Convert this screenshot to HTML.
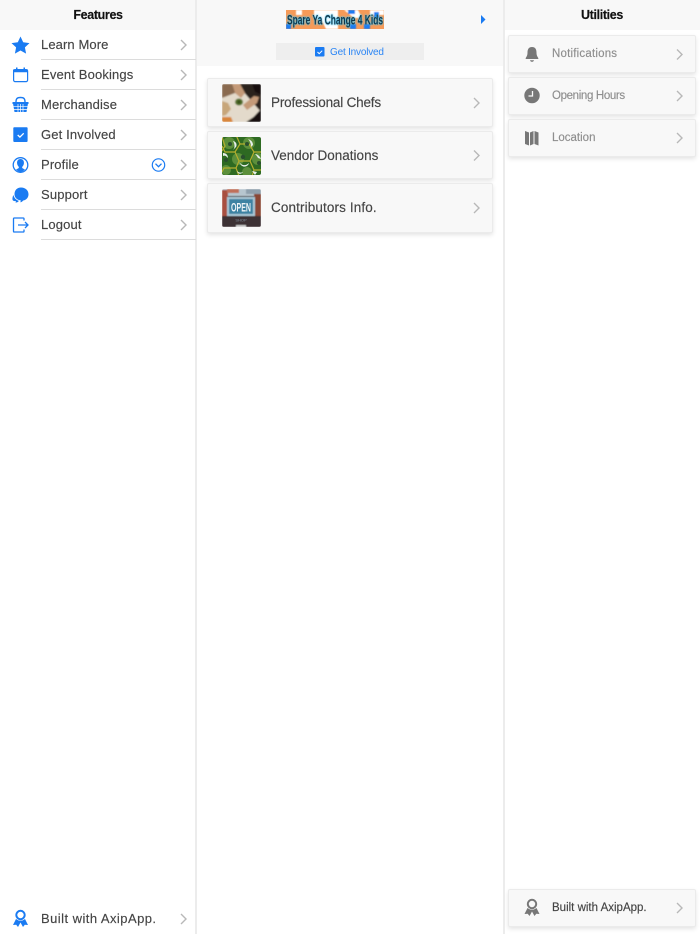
<!DOCTYPE html>
<html><head><meta charset="utf-8">
<style>
*{box-sizing:border-box}
html,body{margin:0;padding:0;width:700px;height:934px;overflow:hidden;background:#fff;font-family:"Liberation Sans",sans-serif}
.a{position:absolute}
.t{position:absolute;white-space:nowrap;line-height:16px;-webkit-text-stroke:.15px currentColor}
.m{font-size:13px;color:#444;letter-spacing:.15px;left:41px}
.c{font-size:13.5px;color:#444;left:271px}
.u{font-size:11.5px;color:#8e8e8e;left:552px}
.line{position:absolute;left:41px;width:155px;height:1px;background:#dcdcdc}
.card{position:absolute;background:#f8f8f8;border:1px solid #ebebeb;border-radius:2px;box-shadow:0 2px 4px rgba(0,0,0,.11)}
.h{font-size:12.5px;font-weight:bold;color:#111;text-align:center;letter-spacing:-.35px}
svg{position:absolute;overflow:visible}
svg.th{overflow:hidden;border-radius:2px}
</style></head><body>
<div class="a" style="left:0;top:0;width:195px;height:30px;background:#f8f8f8"></div>
<div class="a" style="left:197px;top:0;width:307px;height:66px;background:#f8f8f8"></div>
<div class="a" style="left:505px;top:0;width:195px;height:30px;background:#f8f8f8"></div>
<div class="a" style="left:195px;top:0;width:2px;height:934px;background:#ececec"></div>
<div class="a" style="left:503px;top:0;width:2px;height:934px;background:#ececec"></div>

<div class="t h" style="left:0;top:7px;width:196px">Features</div>
<div class="t h" style="left:505px;top:7px;width:194px">Utilities</div>

<div class="t m" style="top:37px;letter-spacing:.1px">Learn More</div>
<div class="t m" style="top:67px">Event Bookings</div>
<div class="t m" style="top:97px">Merchandise</div>
<div class="t m" style="top:127px">Get Involved</div>
<div class="t m" style="top:157px">Profile</div>
<div class="t m" style="top:187px">Support</div>
<div class="t m" style="top:217px">Logout</div>
<div class="t m" style="top:911px;letter-spacing:.45px">Built with AxipApp.</div>
<div class="line" style="top:59px"></div><div class="line" style="top:89px"></div><div class="line" style="top:119px"></div><div class="line" style="top:149px"></div><div class="line" style="top:179px"></div><div class="line" style="top:209px"></div><div class="line" style="top:239px"></div>

<svg style="left:0;top:0" width="700" height="934" fill="none">
<g stroke="#b8b8b8" stroke-width="1.400">
<path d="M181 40l5 5-5 5M181 70l5 5-5 5M181 100l5 5-5 5M181 130l5 5-5 5M181 160l5 5-5 5M181 190l5 5-5 5M181 220l5 5-5 5M181 914l5 5-5 5"/>
</g>
<path fill="#1a7bf2" d="M20.500 36.500l2.700 5.800 6.300.8-4.600 4.300 1.200 6.200-5.600-3.100-5.600 3.100 1.200-6.200-4.600-4.300 6.300-.8z"/>
<rect x="13.600" y="69.600" width="14" height="12" rx="1.500" stroke="#1a7bf2" stroke-width="1.200"/>
<path fill="#1a7bf2" d="M13 69.500h15v2.800H13zM16 67.500h1.500V70H16zM23.500 67.500H25V70h-1.500z"/>
<path fill="#1a7bf2" d="M12.500 102h16v2h-.6l-1.400 8h-12l-1.400-8h-.6z"/>
<path stroke="#1a7bf2" stroke-width="1.400" d="M16 102c0-3.500 1.300-4.500 4.500-4.500s4.500 1 4.500 4.500"/>
<path stroke="#fff" stroke-width=".7" d="M18 104v8M20.500 104v8M23 104v8M13 106.700h15M13 109.400h15"/>
<rect x="13.300" y="127.300" width="14.300" height="14.700" rx="1" fill="#1a7bf2"/>
<path stroke="#fff" stroke-width="1.300" d="M17.700 135l2.200 2.100 3.800-3.800"/>
<circle cx="20.500" cy="165" r="7.300" stroke="#1a7bf2" stroke-width="1.300"/>
<path fill="#1a7bf2" d="M20.500 159c2.600 0 3.700 2 3.400 4.500-.2 1.500-1 2.700-1.700 3.400v1.100l2.800 1.600c-1.300 1.200-2.800 2.400-4.500 2.400s-3.200-1.200-4.500-2.400l2.800-1.600v-1.100c-.7-.7-1.500-1.900-1.700-3.400-.3-2.500.8-4.500 3.400-4.500z"/>
<circle cx="158.500" cy="165" r="6.200" stroke="#1a7bf2" stroke-width="1.200"/>
<path stroke="#1a7bf2" stroke-width="1.300" d="M155.500 163.700l3 3 3-3"/>
<path fill="#1a7bf2" d="M21 187.500c4.300 0 7.500 2.900 7.500 6.700 0 3.200-2 5.800-5.300 6.300-.7 1-1.700 1.700-3 1.700.5-.7.6-1.200.5-1.800-3.700-.5-6.200-3-6.200-6.200 0-3.800 2.500-6.700 6.500-6.700z"/>
<path fill="#1a7bf2" d="M13.500 195c.6 3 2.600 5 5.400 5.900-.6 1-1.700 1.800-3.400 1.600l.5-1.500c-2.700.4-3.900-.6-3.500-3 .1-1.100.4-2 1-3z"/>
<path stroke="#1a7bf2" stroke-width="1.300" d="M24 220.500v-1.700c0-.5-.3-.8-.8-.8H14.300c-.5 0-.8.300-.8.800v12.400c0 .5.300.8.800.8h8.900c.5 0 .8-.3.800-.8v-1.700M18 225h10M25 222l3 3-3 3"/>
<circle cx="20.500" cy="915" r="4.200" stroke="#1a7bf2" stroke-width="2"/>
<path fill="#1a7bf2" d="M16 919l2.500 1.500 2 .2 2-.2 2.500-1.500 3 6-3.200-.2-1.800 2.200-2.500-4.500-2.500 4.500-1.800-2.200-3.200.2z"/>
<path fill="#1a7bf2" d="M481 15l4.500 4.500-4.500 4.500z"/>
</svg>

<div class="a" style="left:276px;top:43px;width:148px;height:17px;background:#eee"></div>
<svg style="left:315px;top:47px" width="10" height="10" fill="none"><rect width="9.500" height="9.500" rx="1" fill="#1a7bf2"/><path stroke="#fff" stroke-width="1" d="M2.500 5l1.700 1.700 3-3"/></svg>
<div class="t" style="left:330px;top:44px;font-size:10px;letter-spacing:-.2px;color:#2a85f5;-webkit-text-stroke:0;line-height:17px">Get Involved</div>

<svg class="th" style="left:286px;top:10px;border-radius:0" width="98" height="19">
<defs><filter id="g" x="-5%" y="-20%" width="110%" height="140%"><feGaussianBlur stdDeviation=".7"/></filter><filter id="b1"><feGaussianBlur stdDeviation=".5"/></filter></defs>
<rect width="98" height="19" fill="#f59a58"/>
<g filter="url(#b1)">
<path fill="#fff" d="M10 0h6v5h-6zM28 0h24v19H40l-4-8-8-3zM58 0h14l4 8h-8zM84 0h14v5h-14z"/>
<path fill="#1a7bf2" d="M62 0h7v4h-7zM64 14h6v5h-6zM88 2h5v6h-5zM0 14h5v5H0zM78 14h6v5h-6z"/>
</g>
<text x="1" y="14.500" font-family="Liberation Sans" font-size="13.500" font-weight="bold" fill="#45c4f2" textLength="96" lengthAdjust="spacingAndGlyphs" filter="url(#g)" stroke="#45c4f2" stroke-width=".8">Spare Ya Change 4 Kids</text>
<text x="1" y="14.500" font-family="Liberation Sans" font-size="13.500" font-weight="bold" fill="#12384c" textLength="96" lengthAdjust="spacingAndGlyphs">Spare Ya Change 4 Kids</text>
</svg>

<div class="card" style="left:207px;top:78px;width:286px;height:49px"></div>
<div class="card" style="left:207px;top:131px;width:286px;height:48px"></div>
<div class="card" style="left:207px;top:183px;width:286px;height:50px"></div>
<div class="t c" style="top:95px;letter-spacing:-.19px">Professional Chefs</div>
<div class="t c" style="top:148px;letter-spacing:0">Vendor Donations</div>
<div class="t c" style="top:200px;letter-spacing:.12px">Contributors Info.</div>

<svg class="th" style="left:222px;top:84px" width="39" height="38">
<defs><filter id="s"><feGaussianBlur stdDeviation=".8"/></filter></defs>
<g filter="url(#s)">
<rect width="39" height="38" fill="#2c241c"/>
<path fill="#e3dacb" d="M0 13L20 6l19 22-15 10H0z"/>
<path fill="#8a6a50" d="M0 0h10l3 9-13 5z"/>
<path fill="#c49a78" d="M10 0h8l5 9-4 5-6-5zM21 21l11-9 5 1-2 6-10 7z"/>
<path fill="#15110d" d="M30 0h9v11l-6-3zM27 38l12-13v13z"/>
<ellipse cx="17" cy="18" rx="4" ry="3.500" fill="#55702a"/>
<path fill="#c7a67a" d="M0 17l6 2 3 6-5 6-4 1z"/>
<path fill="#d8853a" d="M0 33h9l2 5H0z"/>
<circle cx="17" cy="18" r="1.500" fill="#2f4a18"/>
</g>
</svg>
<svg class="th" style="left:222px;top:137px" width="39" height="38">
<defs><filter id="s2"><feGaussianBlur stdDeviation=".35"/></filter></defs>
<g filter="url(#s2)">
<rect width="39" height="38" fill="#2f6b24"/>
<g fill="#5b8f3a"><circle cx="7" cy="6" r="6"/><circle cx="27" cy="6" r="6"/><circle cx="16" cy="22" r="6"/><circle cx="36" cy="22" r="6"/><circle cx="4" cy="33" r="5"/><circle cx="25" cy="35" r="5"/></g>
<g fill="none" stroke="#b5ae2e" stroke-width="1.200"><path d="M0 0l3 9-3 5M14 -2l4 9-5 8H3l-3-6M14 -2M18 7h9M27 7l5 8-4 9M13 15l4 9-3 7 3 8M28 24H17M28 24l4 9-2 6M32 15h7M32 33h7M14 31H2l-2 4"/></g>
<g fill="#e8f0ea"><path d="M11 4a4 4 0 0 1 3 6l-3 3c2-2 2-6 0-9zM26 2c3 1 5 3 5 6l-2 2c0-3-1-6-3-8zM17 25c3 4 7 4 10 1-1 4-7 6-10-1zM1 16c3 0 5 2 5 5-2-2-3-3-5-2zM33 17c2 0 5 2 6 5l-3-1c-1-2-2-3-3-4zM15 34c2 2 4 2 6 1-1 2-5 3-6-1zM30 34l5 1-2 3z"/></g>
<g fill="#2a4f2e"><circle cx="8" cy="7" r="2"/><circle cx="25" cy="7" r="2"/><circle cx="21" cy="20" r="2.200"/><circle cx="4" cy="23" r="2"/><circle cx="37" cy="26" r="2"/></g>
</g>
</svg>
<svg class="th" style="left:222px;top:189px" width="39" height="38">
<defs><filter id="s3"><feGaussianBlur stdDeviation=".5"/></filter></defs>
<g filter="url(#s3)">
<rect width="39" height="38" fill="#3e3236"/>
<rect width="39" height="7" fill="#b7c6cf"/>
<rect x="0" y="1" width="6" height="26" fill="#a8503f"/>
<rect x="5" y="0" width="12" height="4" fill="#c0705a"/>
<rect x="32" y="3" width="7" height="24" fill="#8a4636"/>
<rect x="24" y="0" width="15" height="5" fill="#8fa0ad"/>
<rect x="5" y="8" width="28" height="19" fill="#aac8d6"/>
<rect x="7" y="10" width="24" height="15" fill="#3c82a2"/>
<rect x="14" y="36" width="10" height="2" fill="#c9c9c9"/>
</g>
<text x="19" y="22.500" font-family="Liberation Sans" font-size="12" font-weight="bold" fill="#eef4f7" text-anchor="middle" textLength="20" lengthAdjust="spacingAndGlyphs">OPEN</text>
<text x="19" y="32.500" font-family="Liberation Sans" font-size="4" fill="#7f8c99" text-anchor="middle">SHOP</text>
</svg>
<svg style="left:0;top:0" width="700" height="934" fill="none">
<path stroke="#b8b8b8" stroke-width="1.400" d="M474 98l5 5-5 5M474 150.500l5 5-5 5M474 203l5 5-5 5"/>
</svg>

<div class="card" style="left:508px;top:35px;width:188px;height:38px"></div>
<div class="card" style="left:508px;top:77px;width:188px;height:38px"></div>
<div class="card" style="left:508px;top:119px;width:188px;height:38px"></div>
<div class="card" style="left:508px;top:889px;width:188px;height:38px"></div>
<div class="t u" style="top:46px;letter-spacing:.2px">Notifications</div>
<div class="t u" style="top:88px;letter-spacing:-.35px">Opening Hours</div>
<div class="t u" style="top:130px;letter-spacing:0">Location</div>
<div class="t u" style="top:900px;letter-spacing:0;color:#444">Built with AxipApp.</div>
<svg style="left:0;top:0" width="700" height="934" fill="none">
<path stroke="#b8b8b8" stroke-width="1.400" d="M677 49.500l5 5-5 5M677 91l5 5-5 5M677 133l5 5-5 5M677 903l5 5-5 5"/>
<path fill="#777" d="M532 47c3.200 0 4.500 2.300 4.500 5.500 0 2.800.8 4 1.800 5.500v1h-12.600v-1c1-1.500 1.800-2.700 1.800-5.500 0-3.200 1.300-5.500 4.500-5.500zM530 60.200h4c-.2 1-1 1.600-2 1.600s-1.800-.6-2-1.600z"/>
<circle cx="532" cy="95.500" r="7.700" fill="#777"/>
<path stroke="#f8f8f8" stroke-width="1.300" d="M532.500 91v5h-4"/>
<path fill="#777" d="M525 131.500l4 1.500v13l-4-1.500zM530 133l3.500-1.500v13l-3.500 1.500zM534.500 131.500l4 1.500v13l-4-1.500z" transform="translate(0 -.5)"/>
<circle cx="532" cy="904" r="4.200" stroke="#777" stroke-width="2"/>
<path fill="#777" d="M527.500 908l2.500 1.500 2 .2 2-.2 2.500-1.500 3 6-3.200-.2-1.800 2.200-2.500-4.500-2.500 4.500-1.800-2.200-3.200.2z"/>
</svg>
</body></html>
